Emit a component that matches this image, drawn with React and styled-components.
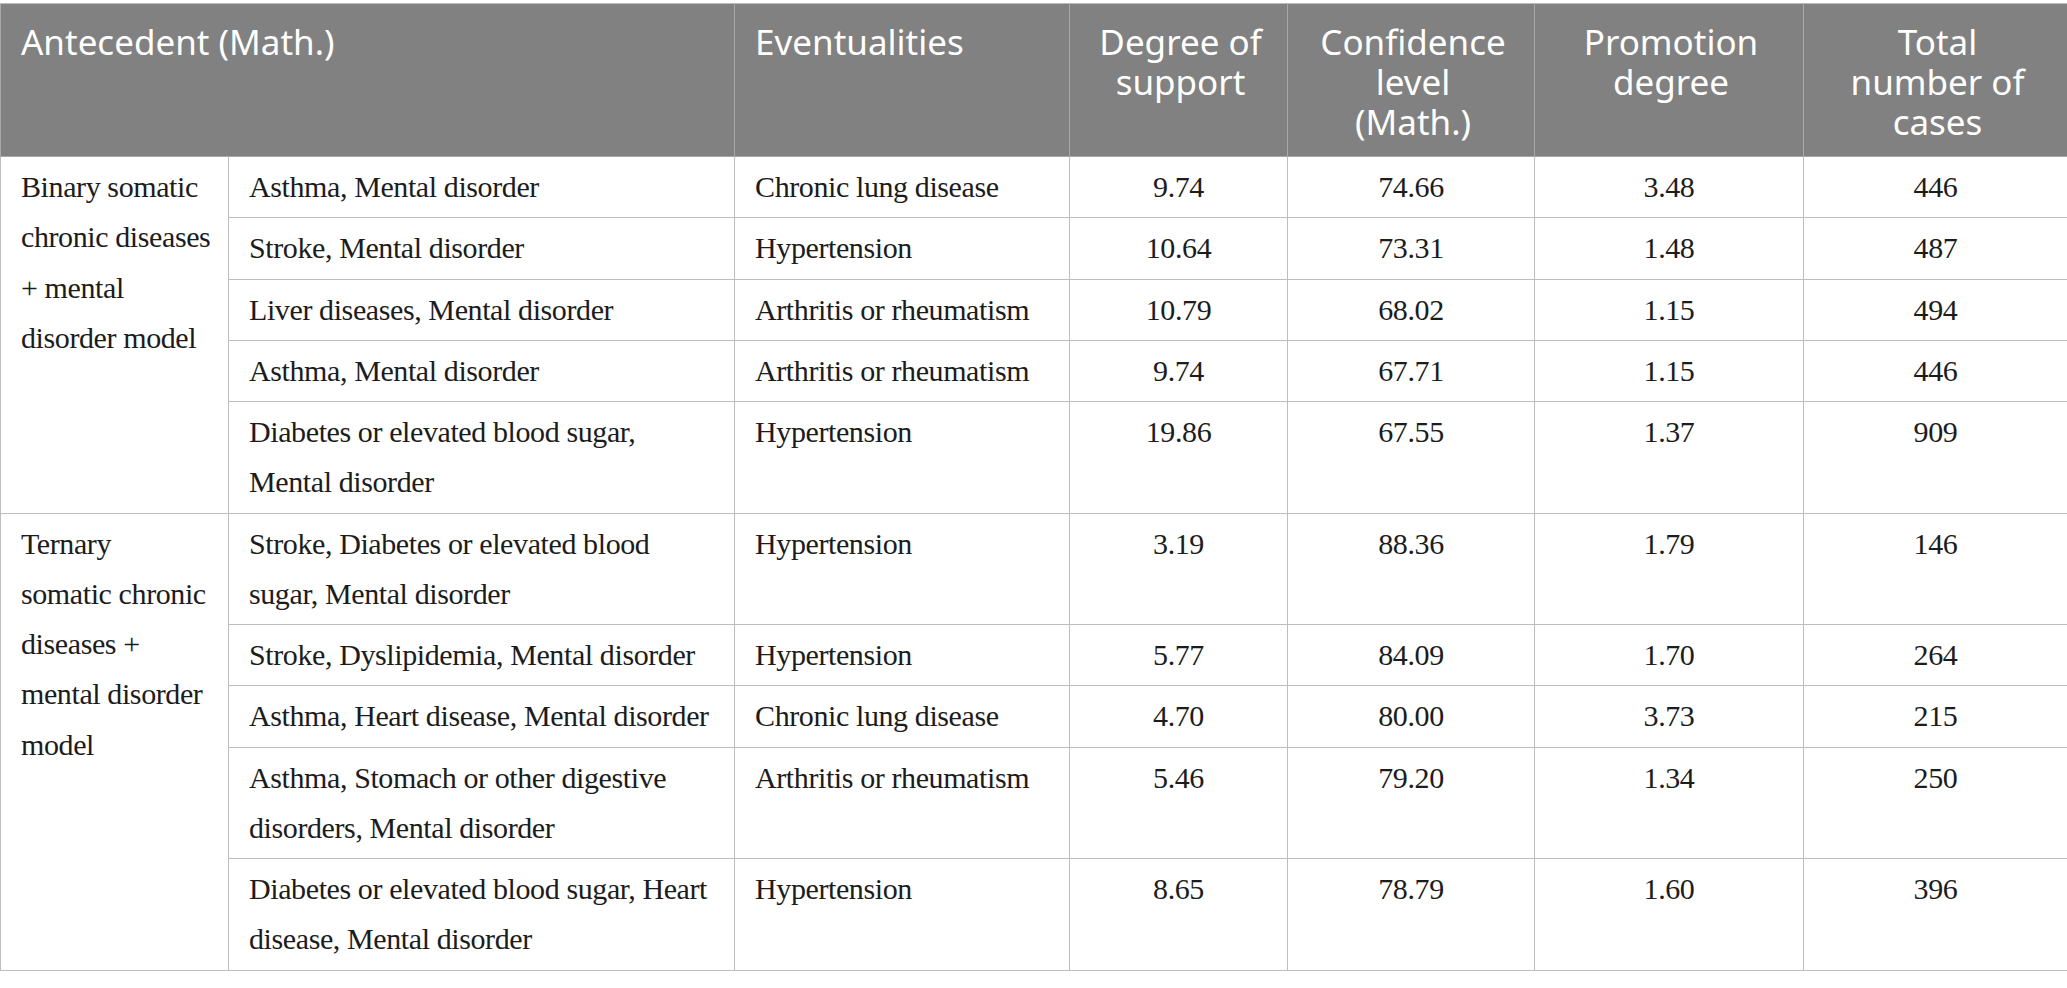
import styled, { createGlobalStyle } from "styled-components";

const Global = createGlobalStyle`
  html, body {
    margin: 0;
    padding: 0;
    background: #ffffff;
  }
`;

const Page = styled.div`
  padding-top: 3px;
`;

const Table = styled.table`
  width: 2067px;
  table-layout: fixed;
  border-collapse: collapse;
  border: 1px solid #bdbdbd;
`;

const HeadRow = styled.tr`
  background: #808180;
`;

const HeadCell = styled.th`
  padding: 18px 16px 14px 20px;
  border: 1px solid #a9a9a9;
  border-top-color: #bdbdbd;
  vertical-align: top;
  text-align: ${(p) => p.$align || "left"};
  font-family: "Noto Sans", "Open Sans", sans-serif;
  font-weight: 400;
  font-size: 35px;
  line-height: 40px;
  color: #ffffff;
`;

const Cell = styled.td`
  padding: 5px 16px 5px 20px;
  border: 1px solid #bdbdbd;
  vertical-align: top;
  text-align: ${(p) => p.$align || "left"};
  font-family: "Liberation Serif", "Times New Roman", serif;
  font-size: 30px;
  letter-spacing: -0.4px;
  line-height: 50.25px;
  color: #1c1c1c;
`;

const NumCell = styled(Cell)`
  padding-left: 10px;
  padding-right: 10px;
  text-align: center;
`;

const Line = styled.span`
  display: block;
  white-space: nowrap;
`;

const widths = [228, 506, 335, 218, 247, 269, 264];

const headers = [
  { lines: ["Antecedent (Math.)"], span: 2 },
  { lines: ["Eventualities"] },
  { lines: ["Degree of", "support"], align: "center" },
  { lines: ["Confidence", "level", "(Math.)"], align: "center" },
  { lines: ["Promotion", "degree"], align: "center" },
  { lines: ["Total", "number of", "cases"], align: "center" },
];

const groups = [
  {
    label: ["Binary somatic", "chronic diseases", "+ mental", "disorder model"],
    rows: [
      ["Asthma, Mental disorder", "Chronic lung disease", "9.74", "74.66", "3.48", "446"],
      ["Stroke, Mental disorder", "Hypertension", "10.64", "73.31", "1.48", "487"],
      ["Liver diseases, Mental disorder", "Arthritis or rheumatism", "10.79", "68.02", "1.15", "494"],
      ["Asthma, Mental disorder", "Arthritis or rheumatism", "9.74", "67.71", "1.15", "446"],
      ["Diabetes or elevated blood sugar, Mental disorder", "Hypertension", "19.86", "67.55", "1.37", "909"],
    ],
  },
  {
    label: ["Ternary", "somatic chronic", "diseases +", "mental disorder", "model"],
    rows: [
      ["Stroke, Diabetes or elevated blood sugar, Mental disorder", "Hypertension", "3.19", "88.36", "1.79", "146"],
      ["Stroke, Dyslipidemia, Mental disorder", "Hypertension", "5.77", "84.09", "1.70", "264"],
      ["Asthma, Heart disease, Mental disorder", "Chronic lung disease", "4.70", "80.00", "3.73", "215"],
      ["Asthma, Stomach or other digestive disorders, Mental disorder", "Arthritis or rheumatism", "5.46", "79.20", "1.34", "250"],
      ["Diabetes or elevated blood sugar, Heart disease, Mental disorder", "Hypertension", "8.65", "78.79", "1.60", "396"],
    ],
  },
];

const App = () => {
  return (
    <Page>
      <Global />
      <Table>
        <colgroup>
          {widths.map((w, i) => (
            <col key={i} style={{ width: w }} />
          ))}
        </colgroup>
        <thead>
          <HeadRow>
            {headers.map((h) => (
              <HeadCell key={h.lines[0]} colSpan={h.span} $align={h.align}>
                {h.lines.map((l) => (
                  <Line key={l}>{l}</Line>
                ))}
              </HeadCell>
            ))}
          </HeadRow>
        </thead>
        <tbody>
          {groups.map((g) =>
            g.rows.map((r, i) => (
              <tr key={g.label[0] + i}>
                {i === 0 && (
                  <Cell rowSpan={g.rows.length}>
                    {g.label.map((l) => (
                      <Line key={l}>{l}</Line>
                    ))}
                  </Cell>
                )}
                <Cell>{r[0]}</Cell>
                <Cell>{r[1]}</Cell>
                <NumCell>{r[2]}</NumCell>
                <NumCell>{r[3]}</NumCell>
                <NumCell>{r[4]}</NumCell>
                <NumCell>{r[5]}</NumCell>
              </tr>
            ))
          )}
        </tbody>
      </Table>
    </Page>
  );
};

export default App;
